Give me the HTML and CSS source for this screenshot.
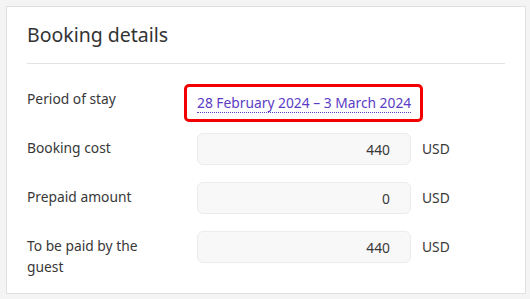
FILE: index.html
```html
<!DOCTYPE html>
<html>
<head>
  <title>Booking details</title>
  <meta charset="utf-8" />
  <link rel="stylesheet" href="styles.css">
</head>
<body>

<!--Booking card-->
<section class="card">
  <h2 class="card-title">Booking details</h2>
  <hr class="divider">

  <div class="fields">
    <div class="label">Period of stay</div>
    <div class="period-cell">
      <span class="period"><a href="#">28 February 2024 – 3 March 2024</a></span>
    </div>

    <div class="label">Booking cost</div>
    <input class="amount" type="text" value="440" readonly>
    <div class="currency">USD</div>

    <div class="label">Prepaid amount</div>
    <input class="amount" type="text" value="0" readonly>
    <div class="currency">USD</div>

    <div class="label">To be paid by the guest</div>
    <input class="amount" type="text" value="440" readonly>
    <div class="currency">USD</div>
  </div>
</section>

</body>
</html>
```

FILE: styles.css
```css
body {
  font-family: 'Noto Sans', 'Open Sans', sans-serif;
  background: #f4f4f4;
  color: #383838;
  margin: 6px 4px 0 6px;
  padding: 0;
}

.card {
  background: #fff;
  border: 1px solid #e0e0e0;
  padding: 14px 20px 16px;
  width: 478px;
}

.card-title {
  margin: 0 0 14px;
  font-size: 19.5px;
  line-height: 28px;
  font-weight: normal;
  color: #333;
}

.divider {
  border: 0;
  border-top: 1px solid #e2e2e2;
  margin: 0 0 20px;
}

.fields {
  display: grid;
  grid-template-columns: 159px 214px auto;
  column-gap: 11px;
  row-gap: 17px;
  font-size: 13.8px;
}

.label {
  padding-top: 4px;
  line-height: 21px;
  padding-right: 10px;
}

.period-cell {
  grid-column: 2 / 4;
  height: 32px;
}

.period {
  display: inline-flex;
  align-items: center;
  box-sizing: border-box;
  height: 38px;
  margin-left: -13px;
  padding: 0 9px 0 10px;
  border: 3px solid #f20000;
  border-radius: 5px;
}

.period a {
  color: #5b3cc4;
  text-decoration: none;
  border-bottom: 1px dotted #5b3cc4;
  line-height: 19px;
}

.amount {
  box-sizing: border-box;
  width: 214px;
  height: 32px;
  margin: 0;
  padding: 0 20px 0 10px;
  border: 1px solid #ececec;
  border-radius: 6px;
  background: #f8f8f8;
  font-family: 'Noto Sans', 'Open Sans', sans-serif;
  font-size: 13.8px;
  color: #383838;
  text-align: right;
  outline: none;
}

.currency {
  line-height: 32px;
}
```
